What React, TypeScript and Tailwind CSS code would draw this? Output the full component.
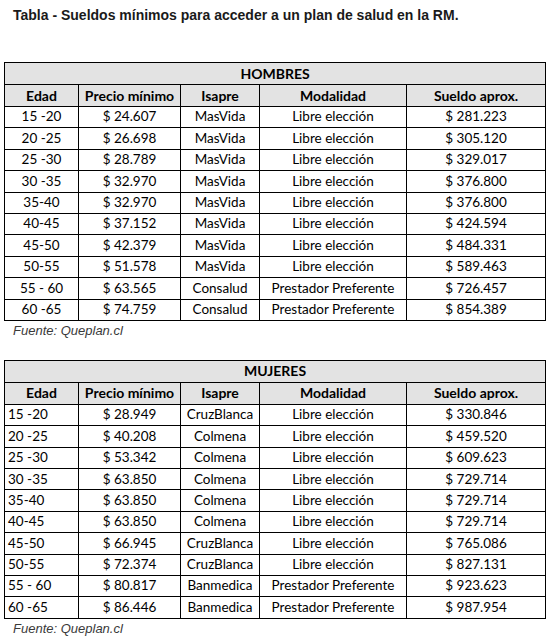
import React from "react";

type Row = [string, string, string, string, string];

const hombres: Row[] = [
  ["15 -20", "24.607", "MasVida", "Libre elección", "281.223"],
  ["20 -25", "26.698", "MasVida", "Libre elección", "305.120"],
  ["25 -30", "28.789", "MasVida", "Libre elección", "329.017"],
  ["30 -35", "32.970", "MasVida", "Libre elección", "376.800"],
  ["35-40", "32.970", "MasVida", "Libre elección", "376.800"],
  ["40-45", "37.152", "MasVida", "Libre elección", "424.594"],
  ["45-50", "42.379", "MasVida", "Libre elección", "484.331"],
  ["50-55", "51.578", "MasVida", "Libre elección", "589.463"],
  ["55 - 60", "63.565", "Consalud", "Prestador Preferente", "726.457"],
  ["60 -65", "74.759", "Consalud", "Prestador Preferente", "854.389"],
];

const mujeres: Row[] = [
  ["15 -20", "28.949", "CruzBlanca", "Libre elección", "330.846"],
  ["20 -25", "40.208", "Colmena", "Libre elección", "459.520"],
  ["25 -30", "53.342", "Colmena", "Libre elección", "609.623"],
  ["30 -35", "63.850", "Colmena", "Libre elección", "729.714"],
  ["35-40", "63.850", "Colmena", "Libre elección", "729.714"],
  ["40-45", "63.850", "Colmena", "Libre elección", "729.714"],
  ["45-50", "66.945", "CruzBlanca", "Libre elección", "765.086"],
  ["50-55", "72.374", "CruzBlanca", "Libre elección", "827.131"],
  ["55 - 60", "80.817", "Banmedica", "Prestador Preferente", "923.623"],
  ["60 -65", "86.446", "Banmedica", "Prestador Preferente", "987.954"],
];

function Table({ title, rows, leftEdad }: { title: string; rows: Row[]; leftEdad: boolean }) {
  const cell = "border border-black p-0 leading-none";
  return (
    <table
      className="table-fixed border-collapse w-[541px] text-[13.5px] text-black"
      style={{ fontFamily: "Lato, 'Open Sans', sans-serif" }}
    >
      <colgroup>
        <col className="w-[74px]" />
        <col className="w-[102px]" />
        <col className="w-[79px]" />
        <col className="w-[147px]" />
        <col className="w-[139px]" />
      </colgroup>
      <tbody>
        <tr className="h-[22px] bg-[#e3e3e3] text-[14px]">
          <td colSpan={5} className={`${cell} text-center font-bold`}>
            {title}
          </td>
        </tr>
        <tr className="h-[22px] bg-[#e3e3e3] font-bold text-[14px]">
          <td className={`${cell} text-center`}>Edad</td>
          <td className={`${cell} text-center`}>Precio mínimo</td>
          <td className={`${cell} text-center`}>Isapre</td>
          <td className={`${cell} text-center`}>Modalidad</td>
          <td className={`${cell} text-center`}>Sueldo aprox.</td>
        </tr>
        {rows.map((r, i) => (
          <tr key={i} className="h-[21.4px]">
            <td className={`${cell} ${leftEdad ? "text-left pl-[3px]" : "text-center"}`}>{r[0]}</td>
            <td className={`${cell} text-center`}>$ {r[1]}</td>
            <td className={`${cell} text-center`}>{r[2]}</td>
            <td className={`${cell} text-center`}>{r[3]}</td>
            <td className={`${cell} text-center`}>$ {r[4]}</td>
          </tr>
        ))}
      </tbody>
    </table>
  );
}

export default function App() {
  return (
    <div className="w-[549px] h-[640px] bg-white overflow-hidden">
      <div
        className="pl-[13px] pt-[6px] text-[14px] font-bold text-[#1a1a1a] leading-[18px]"
        style={{ fontFamily: "'Liberation Sans', Arial, sans-serif" }}
      >
        Tabla - Sueldos mínimos para acceder a un plan de salud en la RM.
      </div>
      <div className="pl-[4px] pt-[38px]">
        <Table title="HOMBRES" rows={hombres} leftEdad={false} />
      </div>
      <div
        className="pl-[13px] pt-[2px] h-[39px] text-[13px] italic text-[#3a3a3a] leading-[15px]"
        style={{ fontFamily: "'Liberation Sans', Arial, sans-serif" }}
      >
        Fuente: Queplan.cl
      </div>
      <div className="pl-[4px]">
        <Table title="MUJERES" rows={mujeres} leftEdad={true} />
      </div>
      <div
        className="pl-[13px] pt-[2px] text-[13px] italic text-[#3a3a3a] leading-[15px]"
        style={{ fontFamily: "'Liberation Sans', Arial, sans-serif" }}
      >
        Fuente: Queplan.cl
      </div>
    </div>
  );
}
